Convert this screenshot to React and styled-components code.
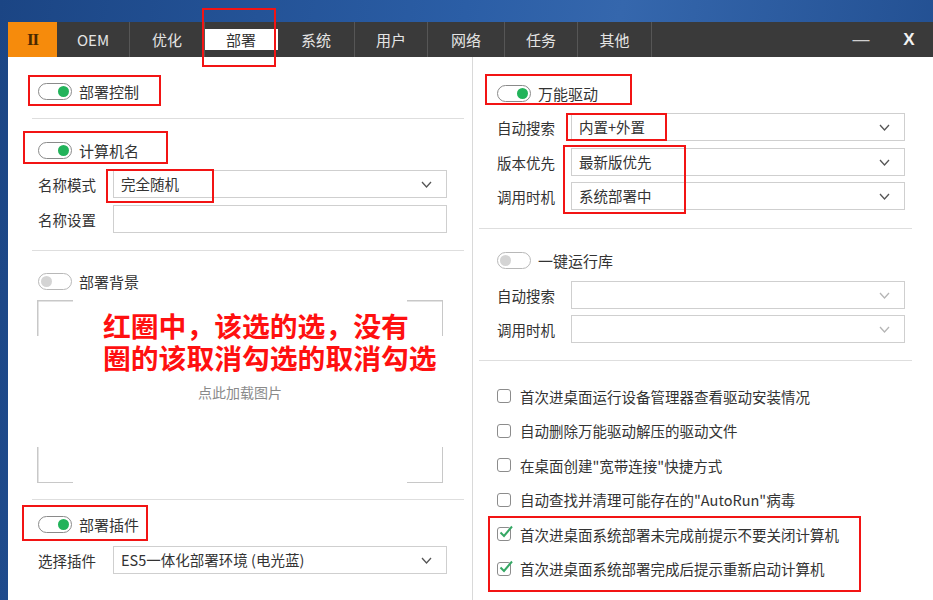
import React from "react";
import styled, { createGlobalStyle } from "styled-components";

const GlobalStyle = createGlobalStyle`
  html, body {
    margin: 0;
    padding: 0;
  }
  body {
    font-family: "Noto Sans CJK SC", "Liberation Sans", sans-serif;
    color: #333;
  }
  * {
    box-sizing: border-box;
  }
`;

const Page = styled.div`
  height: 600px;
  overflow: hidden;
  padding: 22px 0 0 8px;
  background: linear-gradient(100deg, #1b4584 0%, #2b5ea6 45%, #3567ad 60%, #1e4a8b 100%);
`;

const Window = styled.div`
  height: 578px;
  display: flex;
  flex-direction: column;
  background: #fff;
`;

const TabBar = styled.div`
  height: 35px;
  flex-shrink: 0;
  display: flex;
  align-items: stretch;
  background: #3a3a3a;
`;

const BrandTab = styled.div`
  width: 49px;
  display: flex;
  align-items: center;
  justify-content: center;
  background: #f68b0c;
  color: #4a2a00;
  font-family: "Liberation Serif", serif;
  font-weight: 700;
  font-size: 17px;
  letter-spacing: -1px;
`;

const Tab = styled.div`
  width: ${(p) => p.$w || 74}px;
  display: flex;
  align-items: center;
  justify-content: center;
  border-right: 1px solid ${(p) => (p.$active ? "#fff" : "#565656")};
  background: ${(p) => (p.$active ? "#fff" : "transparent")};
  color: ${(p) => (p.$active ? "#333" : "#e4e4e4")};
  font-size: 15px;
`;

const Spacer = styled.div`
  flex: 1;
`;

const WinButton = styled.div`
  width: 48px;
  display: flex;
  align-items: center;
  justify-content: center;
  color: ${(p) => p.$color || "#ddd"};
  font-size: 17px;
  font-family: "Liberation Sans", sans-serif;
  font-weight: ${(p) => p.$weight || 400};
`;

const Body = styled.div`
  flex: 1;
  display: grid;
  grid-template-columns: 464px 1fr;
`;

const Column = styled.div`
  display: flex;
  flex-direction: column;
  border-left: ${(p) => (p.$divided ? "1px solid #d9d9d9" : "none")};
`;

const Section = styled.div`
  margin: ${(p) => p.$margin};
  padding: ${(p) => p.$pt}px ${(p) => p.$pr}px ${(p) => p.$pb}px ${(p) => p.$pl}px;
  border-bottom: ${(p) => (p.$last ? "none" : "1px solid #dedede")};
  display: flex;
  flex-direction: column;
  align-items: flex-start;
`;

const Ring = styled.span`
  position: relative;
  display: inline-flex;
  align-items: center;
  &::after {
    content: "";
    position: absolute;
    top: ${(p) => p.$t}px;
    right: ${(p) => p.$r}px;
    bottom: ${(p) => p.$b}px;
    left: ${(p) => p.$l}px;
    border: 2px solid #f21414;
    pointer-events: none;
    z-index: 2;
  }
`;

const ToggleRow = styled.div`
  height: 20px;
  display: flex;
  align-items: center;
  gap: 7px;
  font-size: 15px;
  color: #333;
`;

const ToggleTrack = styled.span`
  width: 34px;
  height: 17px;
  border-radius: 9px;
  border: 1.5px solid ${(p) => (p.$on ? "#8a8a8a" : "#b8b8b8")};
  background: #fff;
  display: flex;
  align-items: center;
  justify-content: ${(p) => (p.$on ? "flex-end" : "flex-start")};
  padding: 0 2px;
`;

const ToggleDot = styled.span`
  width: 11px;
  height: 11px;
  border-radius: 50%;
  background: ${(p) => (p.$on ? "#22b35a" : "#d4d4d4")};
`;

const Field = styled.div`
  width: 100%;
  height: 28px;
  margin-top: ${(p) => p.$mt}px;
  display: flex;
  align-items: center;
`;

const FieldLabel = styled.span`
  width: ${(p) => p.$w}px;
  flex-shrink: 0;
  font-size: 14.5px;
  color: #333;
`;

const SelectBox = styled.div`
  flex: 1;
  height: 28px;
  border: 1px solid #cfcfcf;
  background: #fff;
  display: flex;
  align-items: center;
  justify-content: space-between;
  padding: 0 14px 0 7px;
  font-size: 14.5px;
  color: #333;
`;

const SelectValue = styled.span`
  height: 26px;
  line-height: 26px;
`;

const ImageBox = styled.div`
  position: relative;
  align-self: stretch;
  height: 183px;
  margin: 9px 21px 0 -1px;
  display: flex;
  align-items: center;
  justify-content: center;
  color: #8a8a8a;
  font-size: 14px;
  background:
    linear-gradient(#c8c8c8, #c8c8c8) top left / 36px 1.5px no-repeat,
    linear-gradient(#c8c8c8, #c8c8c8) top left / 1.5px 36px no-repeat,
    linear-gradient(#c8c8c8, #c8c8c8) top right / 36px 1.5px no-repeat,
    linear-gradient(#c8c8c8, #c8c8c8) top right / 1.5px 36px no-repeat,
    linear-gradient(#c8c8c8, #c8c8c8) bottom left / 36px 1.5px no-repeat,
    linear-gradient(#c8c8c8, #c8c8c8) bottom left / 1.5px 36px no-repeat,
    linear-gradient(#c8c8c8, #c8c8c8) bottom right / 36px 1.5px no-repeat,
    linear-gradient(#c8c8c8, #c8c8c8) bottom right / 1.5px 36px no-repeat;
`;

const Annotation = styled.div`
  position: absolute;
  left: 66px;
  top: 9px;
  color: #ff1010;
  font-size: 27.8px;
  font-weight: 700;
  line-height: 32px;
  white-space: nowrap;
`;

const CheckList = styled.div`
  display: flex;
  flex-direction: column;
  gap: 14.5px;
`;

const CheckRow = styled.div`
  height: 20px;
  display: flex;
  align-items: center;
  gap: 9px;
  font-size: 14.5px;
  color: #333;
  white-space: nowrap;
`;

const CheckBox = styled.span`
  position: relative;
  width: 14px;
  height: 14px;
  flex-shrink: 0;
  border: 1.5px solid #8c8c8c;
  border-radius: 3px;
  background: #fff;
  svg {
    position: absolute;
    left: 0px;
    top: -3px;
  }
`;

const Chevron = ({ muted }) => (
  <svg width="11" height="7" viewBox="0 0 11 7">
    <path
      d="M1 1 L5.5 6 L10 1"
      fill="none"
      stroke={muted ? "#b5b5b5" : "#555"}
      strokeWidth="1.3"
    />
  </svg>
);

const Toggle = ({ on, label }) => (
  <ToggleRow>
    <ToggleTrack $on={on}>
      <ToggleDot $on={on} />
    </ToggleTrack>
    {label}
  </ToggleRow>
);

const Select = ({ value, muted }) => (
  <SelectBox>
    <SelectValue>{value}</SelectValue>
    <Chevron muted={muted} />
  </SelectBox>
);

const Check = ({ checked, label }) => (
  <CheckRow>
    <CheckBox>
      {checked && (
        <svg width="16" height="14" viewBox="0 0 16 14">
          <path
            d="M2.5 7.5 L6 11 L14 1.5"
            fill="none"
            stroke="#36a865"
            strokeWidth="2"
          />
        </svg>
      )}
    </CheckBox>
    {label}
  </CheckRow>
);

const tabs = ["OEM", "优化", "部署", "系统", "用户", "网络", "任务", "其他"];
const tabWidths = [73, 75, 73, 77, 73, 77, 73, 74];

const checks = [
  "首次进桌面运行设备管理器查看驱动安装情况",
  "自动删除万能驱动解压的驱动文件",
  "在桌面创建\"宽带连接\"快捷方式",
  "自动查找并清理可能存在的\"AutoRun\"病毒",
];

const App = () => {
  return (
    <Page>
      <GlobalStyle />
      <Window>
        <TabBar>
          <BrandTab>II</BrandTab>
          {tabs.map((t, i) =>
            t === "部署" ? (
              <Ring key={t} $t={-14} $r={2} $b={-10} $l={-3}>
                <Tab $active $w={tabWidths[i]}>
                  {t}
                </Tab>
              </Ring>
            ) : (
              <Tab key={t} $w={tabWidths[i]}>
                {t}
              </Tab>
            )
          )}
          <Spacer />
          <WinButton $color="#cfcfcf">—</WinButton>
          <WinButton $color="#f2f2f2" $weight={700}>
            X
          </WinButton>
        </TabBar>

        <Body>
          <Column>
            <Section $margin="0 8px 0 24px" $pt={24} $pr={0} $pb={17} $pl={6}>
              <Ring $t={-6} $r={-22} $b={-5} $l={-10}>
                <Toggle on label="部署控制" />
              </Ring>
            </Section>

            <Section $margin="0 8px 0 24px" $pt={21} $pr={17} $pb={17} $pl={6}>
              <Ring $t={-9} $r={-29} $b={-4} $l={-15}>
                <Toggle on label="计算机名" />
              </Ring>
              <Field $mt={10}>
                <FieldLabel $w={75}>名称模式</FieldLabel>
                <SelectBox>
                  <Ring $t={-2} $r={-35} $b={-6} $l={-15}>
                    <SelectValue>完全随机</SelectValue>
                  </Ring>
                  <Chevron />
                </SelectBox>
              </Field>
              <Field $mt={7}>
                <FieldLabel $w={75}>名称设置</FieldLabel>
                <SelectBox />
              </Field>
            </Section>

            <Section $margin="0 8px 0 24px" $pt={20} $pr={0} $pb={16} $pl={6}>
              <Toggle label="部署背景" />
              <ImageBox>
                点此加载图片
                <Annotation>
                  红圈中，该选的选，没有
                  <br />
                  圈的该取消勾选的取消勾选
                </Annotation>
              </ImageBox>
            </Section>

            <Section $margin="0 8px 0 24px" $pt={14} $pr={17} $pb={0} $pl={6} $last>
              <Ring $t={-9} $r={-9} $b={-7} $l={-16}>
                <Toggle on label="部署插件" />
              </Ring>
              <Field $mt={12}>
                <FieldLabel $w={75}>选择插件</FieldLabel>
                <Select value="ES5一体化部署环境 (电光蓝)" />
              </Field>
            </Section>
          </Column>

          <Column $divided>
            <Section $margin="0 21px 0 6px" $pt={26} $pr={7} $pb={18} $pl={18}>
              <Ring $t={-9} $r={-34} $b={-2} $l={-12}>
                <Toggle on label="万能驱动" />
              </Ring>
              <Field $mt={10}>
                <FieldLabel $w={74}>自动搜索</FieldLabel>
                <SelectBox>
                  <Ring $t={-1} $r={-22} $b={-1} $l={-13}>
                    <SelectValue>内置+外置</SelectValue>
                  </Ring>
                  <Chevron />
                </SelectBox>
              </Field>
              <Field $mt={7}>
                <FieldLabel $w={74}>版本优先</FieldLabel>
                <SelectBox>
                  <Ring $t={-4} $r={-34} $b={-39} $l={-16}>
                    <SelectValue>最新版优先</SelectValue>
                  </Ring>
                  <Chevron />
                </SelectBox>
              </Field>
              <Field $mt={6}>
                <FieldLabel $w={74}>调用时机</FieldLabel>
                <Select value="系统部署中" />
              </Field>
            </Section>

            <Section $margin="0 21px 0 6px" $pt={21} $pr={7} $pb={17} $pl={18}>
              <Toggle label="一键运行库" />
              <Field $mt={11}>
                <FieldLabel $w={74}>自动搜索</FieldLabel>
                <Select value="" muted />
              </Field>
              <Field $mt={6}>
                <FieldLabel $w={74}>调用时机</FieldLabel>
                <Select value="" muted />
              </Field>
            </Section>

            <Section $margin="0 21px 0 6px" $pt={25} $pr={7} $pb={0} $pl={18} $last>
              <CheckList>
                {checks.map((c) => (
                  <Check key={c} label={c} />
                ))}
                <Ring $t={-8} $r={-22} $b={-13} $l={-9}>
                  <CheckList>
                    <Check checked label="首次进桌面系统部署未完成前提示不要关闭计算机" />
                    <Check checked label="首次进桌面系统部署完成后提示重新启动计算机" />
                  </CheckList>
                </Ring>
              </CheckList>
            </Section>
          </Column>
        </Body>
      </Window>
    </Page>
  );
};

export default App;
